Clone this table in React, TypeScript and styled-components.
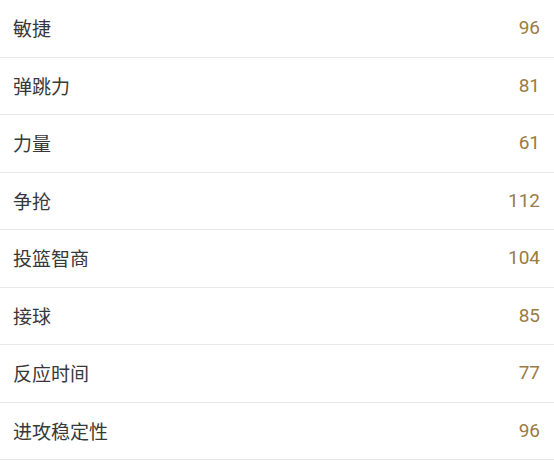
import React from 'react';
import styled, { createGlobalStyle } from 'styled-components';

const GlobalStyle = createGlobalStyle`
  html, body {
    margin: 0;
    padding: 0;
    background: #ffffff;
  }
  body {
    font-family: Roboto, "Noto Sans CJK SC", sans-serif;
  }
`;

const List = styled.div`
  display: flex;
  flex-direction: column;
  width: 554px;
`;

const Row = styled.div`
  display: flex;
  align-items: center;
  justify-content: space-between;
  box-sizing: border-box;
  height: 57.5px;
  padding: 0 14px 1px 13px;
  border-bottom: 1px solid #e9e9e9;
`;

const Label = styled.span`
  font-size: 19px;
  color: #383838;
`;

const Value = styled.span`
  font-size: 19px;
  color: #9b7b45;
`;

const stats: [string, number][] = [
  ['敏捷', 96],
  ['弹跳力', 81],
  ['力量', 61],
  ['争抢', 112],
  ['投篮智商', 104],
  ['接球', 85],
  ['反应时间', 77],
  ['进攻稳定性', 96],
];

const App: React.FC = () => {
  return (
    <>
      <GlobalStyle />
      <List>
        {stats.map(([name, value]) => (
          <Row key={name}>
            <Label>{name}</Label>
            <Value>{value}</Value>
          </Row>
        ))}
      </List>
    </>
  );
};

export default App;
